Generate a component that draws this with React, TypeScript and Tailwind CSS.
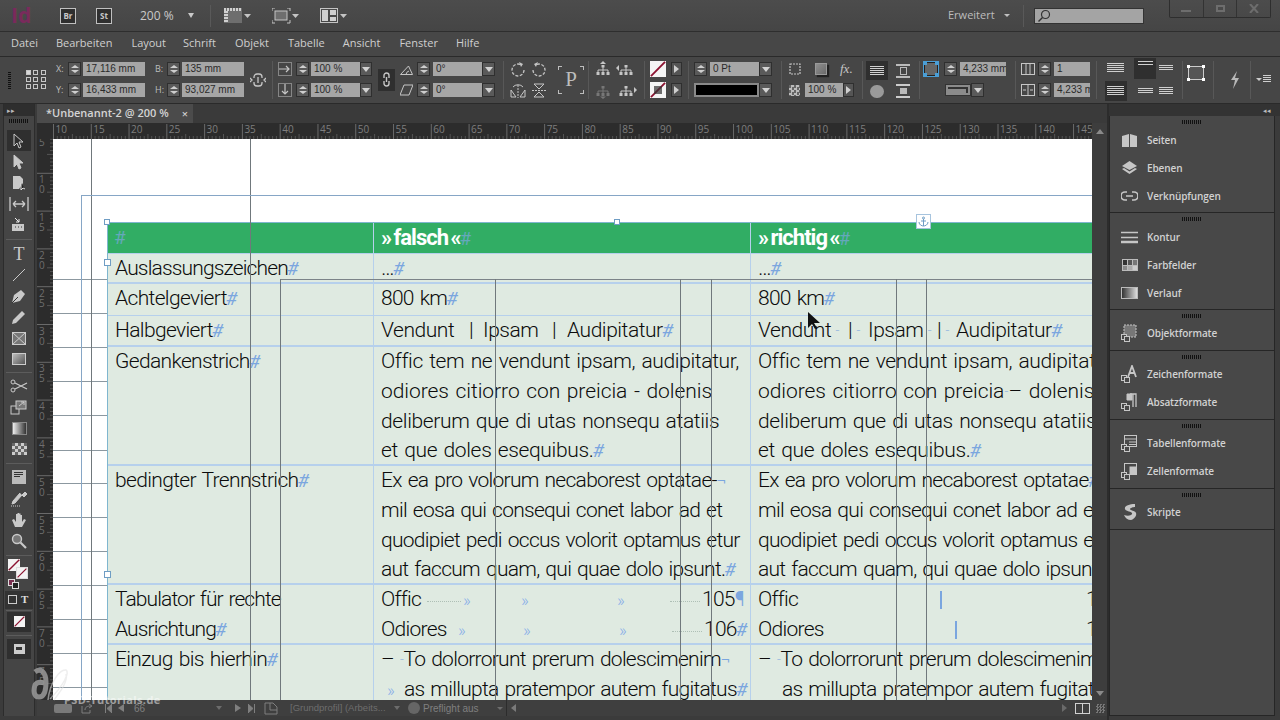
import React from "react";

const S = ({ w, h, children, className = "" }: { w: number; h: number; children?: React.ReactNode; className?: string }) => (
  <svg width={w} height={h} viewBox={`0 0 ${w} ${h}`} fill="none" stroke="currentColor" className={"shrink-0 " + className}>
    {children}
  </svg>
);

const Grip = ({ className = "" }: { className?: string }) => (
  <div className={"w-[20px] h-[4px] bg-[repeating-linear-gradient(90deg,#111_0_1px,transparent_1px_2px)] " + className} />
);

const Spin = () => (
  <div className="w-[13px] h-[14px] bg-[#5a5a5a] border border-[#2f2f2f] flex flex-col items-center justify-center gap-[2px] shrink-0">
    <div className="w-0 h-0 border-x-[4px] border-x-transparent border-b-[3px] border-b-[#cfcfcf]" />
    <div className="w-0 h-0 border-x-[4px] border-x-transparent border-t-[3px] border-t-[#cfcfcf]" />
  </div>
);

const Field = ({ children, className = "" }: { children?: React.ReactNode; className?: string }) => (
  <div className={"h-[14px] bg-[#a6a6a6] text-[#2a2a2a] text-[10px] leading-[14px] pl-[3px] overflow-hidden whitespace-nowrap shrink-0 font-['Liberation_Sans',sans-serif] " + className}>{children}</div>
);

const Drop = ({ className = "w-[12px]" }: { className?: string }) => (
  <div className={"h-[14px] bg-[#5a5a5a] border border-[#2f2f2f] flex items-center justify-center shrink-0 " + className}>
    <div className="w-0 h-0 border-x-[4px] border-x-transparent border-t-[5px] border-t-[#d2d2d2]" />
  </div>
);

const ArrowBox = () => (
  <div className="w-[11px] h-[14px] bg-[#555] border border-[#2f2f2f] flex items-center justify-center shrink-0">
    <div className="w-0 h-0 border-y-[4px] border-y-transparent border-l-[5px] border-l-[#cfcfcf]" />
  </div>
);

const Sep = ({ className }: { className: string }) => <div className={"w-px h-[38px] bg-[#585858] shrink-0 " + className} />;

const NoSwatch = ({ size = 17 }: { size?: number }) => (
  <svg width={size} height={size} viewBox="0 0 17 17" className="shrink-0">
    <rect width="17" height="17" fill="#f4f4f4" />
    <path d="M1 16 16 1" stroke="#8c1230" strokeWidth="2" />
  </svg>
);

const Row2 = ({ children, className = "" }: { children: React.ReactNode; className?: string }) => (
  <div className={"flex flex-col gap-[7px] shrink-0 " + className}>{children}</div>
);
const R = ({ children }: { children: React.ReactNode }) => <div className="flex items-center h-[14px]">{children}</div>;
const Lbl = ({ children }: { children: React.ReactNode }) => <div className="w-[12px] text-[9px] text-[#bdbdbd] leading-[14px]">{children}</div>;

function TitleBar() {
  return (
    <div className="h-[32px] shrink-0 relative flex items-center bg-[linear-gradient(#4c4c4c,#454545)] border-b border-[#2e2e2e] text-[#c9c9c9]">
      <div className="ml-[11px] w-[20px] text-[#7a2a5c] text-[21px] font-bold leading-none">Id</div>
      <div className="ml-[29px] w-[16px] h-[16px] border border-[#c0c0c0] bg-[#2f2f2f] text-[8px] font-bold leading-[14px] text-center">Br</div>
      <div className="ml-[20px] w-[16px] h-[16px] border border-[#c0c0c0] bg-[#2f2f2f] text-[8px] font-bold leading-[14px] text-center">St</div>
      <div className="ml-[28px] w-[40px] text-[12px]">200 %</div>
      <div className="ml-[8px] w-0 h-0 border-x-[3.5px] border-x-transparent border-t-[5px] border-t-[#c9c9c9]" />
      <div className="ml-[16px] w-px h-[22px] bg-[#595959]" />
      <S w={27} h={16} className="ml-[13px] text-[#c4c4c4]">
        <rect x="0" y="0" width="18" height="15" fill="#6e6e6e" stroke="none" />
        <path d="M0 1.500h18" stroke="#d0d0d0" strokeWidth="3" strokeDasharray="2 1" />
        <path d="M2 3v12" stroke="#d0d0d0" strokeWidth="4" strokeDasharray="2 1" />
        <path d="M20 6h7l-3.5 4z" fill="#c4c4c4" stroke="none" />
      </S>
      <S w={27} h={16} className="ml-[21px] text-[#c4c4c4]">
        <rect x="3" y="3" width="12" height="9" fill="#6e6e6e" />
        <path d="M0 3V0h3M15 0h3v3M0 12v3h3M15 15h3v-3" />
        <path d="M20 6h7l-3.5 4z" fill="#c4c4c4" stroke="none" />
      </S>
      <S w={27} h={16} className="ml-[21px] text-[#c4c4c4]">
        <rect x="0.5" y="0.5" width="17" height="14" />
        <rect x="2" y="2" width="6" height="11" fill="#cfcfcf" stroke="none" />
        <rect x="10" y="2" width="6" height="5" fill="#cfcfcf" stroke="none" />
        <rect x="10" y="9" width="6" height="4" fill="#cfcfcf" stroke="none" />
        <path d="M20 6h7l-3.5 4z" fill="#c4c4c4" stroke="none" />
      </S>
      <div className="flex-1" />
      <div className="w-[56px] text-[11px] text-[#bdbdbd]">Erweitert</div>
      <div className="w-0 h-0 border-x-[3px] border-x-transparent border-t-[3px] border-t-[#c0c0c0] mr-[13px]" />
      <div className="w-px h-[22px] bg-[#595959]" />
      <div className="ml-[10px] mr-[136px] w-[110px] h-[16px] bg-[#a4a4a4] border border-[#333] flex items-center pl-[2px] text-[#333]">
        <S w={14} h={14}>
          <circle cx="8.5" cy="5.5" r="4" strokeWidth="1.2" />
          <path d="M5.5 8.5 1.5 12.5" strokeWidth="1.5" />
        </S>
      </div>
      <div className="absolute right-[9px] top-0 w-[102px] h-[18px] border border-t-0 border-[#2e2e2e] rounded-b-[2px] flex text-[#6d6d6d]">
        <div className="flex-1 flex items-center justify-center border-r border-[#333]"><div className="w-[10px] h-[2px] mt-[4px] bg-[#6d6d6d]" /></div>
        <div className="flex-1 flex items-center justify-center border-r border-[#333]"><div className="w-[9px] h-[7px] border-2 border-[#6d6d6d]" /></div>
        <div className="flex-1 flex items-center justify-center">
          <S w={10} h={9}><path d="M1 0 9 9M9 0 1 9" strokeWidth="2" /></S>
        </div>
      </div>
    </div>
  );
}

function MenuBar() {
  const items = [
    ["Datei", "ml-[11px]"],
    ["Bearbeiten", "ml-[18px]"],
    ["Layout", "ml-[19px]"],
    ["Schrift", "ml-[17px]"],
    ["Objekt", "ml-[19px]"],
    ["Tabelle", "ml-[19px]"],
    ["Ansicht", "ml-[18px]"],
    ["Fenster", "ml-[19px]"],
    ["Hilfe", "ml-[18px]"],
  ];
  return (
    <div className="h-[24px] shrink-0 flex items-center pb-[2px] bg-[#474747] text-[11px] text-[#cfcfcf]">
      {items.map(([t, c]) => (
        <span key={t} className={c}>{t}</span>
      ))}
    </div>
  );
}

const Org = ({ dim = false, arrow }: { dim?: boolean; arrow: "u" | "d" | "l" | "r" }) => (
  <S w={21} h={17} className={dim ? "text-[#777]" : "text-[#c6c6c6]"}>
    <path d="M10 6v3M5 12V9h10v3M10 9v3" />
    <rect x="8.500" y="4" width="3" height="2.500" fill="currentColor" stroke="none" />
    <rect x="3.500" y="11" width="3" height="3" fill="currentColor" stroke="none" />
    <rect x="8.500" y="11" width="3" height="3" fill="currentColor" stroke="none" />
    <rect x="13.500" y="11" width="3" height="3" fill="currentColor" stroke="none" />
    {arrow === "u" && <path d="M7 3h6l-3-3z" fill="currentColor" stroke="none" />}
    {arrow === "d" && <path d="M7 14.500h6l-3 2.500z" fill="currentColor" stroke="none" />}
    {arrow === "l" && <path d="M3 4v6L0 7z" fill="currentColor" stroke="none" />}
    {arrow === "r" && <path d="M18 5v6l3-3z" fill="currentColor" stroke="none" />}
  </S>
);

function ControlBar() {
  const ic = "text-[#c6c6c6]";
  return (
    <div className="h-[48px] shrink-0 flex items-center pb-[1px] bg-[#464646] border-y border-[#2a2a2a] text-[#c6c6c6] overflow-hidden">
      <div className="ml-[8px] w-[3px] h-[18px] bg-[repeating-linear-gradient(0deg,#111_0_1px,transparent_1px_2px)] shrink-0" />
      <div className="ml-[15px] w-[20px] grid grid-cols-3 gap-[2px] shrink-0">
        {Array.from({ length: 9 }).map((_, i) => (
          <div key={i} className={"w-[5px] h-[5px] border border-[#c6c6c6] " + (i === 0 ? "bg-[#d8d8d8]" : "")} />
        ))}
      </div>
      <Row2 className="ml-[10px]">
        <R><Lbl>X:</Lbl><Spin /><Field className="ml-[2px] w-[62px]">17,116 mm</Field></R>
        <R><Lbl>Y:</Lbl><Spin /><Field className="ml-[2px] w-[62px]">16,433 mm</Field></R>
      </Row2>
      <Row2 className="ml-[10px]">
        <R><Lbl>B:</Lbl><Spin /><Field className="ml-[2px] w-[62px]">135 mm</Field></R>
        <R><Lbl>H:</Lbl><Spin /><Field className="ml-[2px] w-[62px]">93,027 mm</Field></R>
      </Row2>
      <S w={16} h={16} className="ml-[6px]">
        <path d="M4 6V5a3 3 0 0 1 3-3h2a3 3 0 0 1 3 3v1M4 10v1a3 3 0 0 0 3 3h2a3 3 0 0 0 3-3v-1M8 5v6M0 6l2 2-2 2M16 6l-2 2 2 2" strokeWidth="1.3" />
      </S>
      <Sep className="ml-[6px]" />
      <Row2 className="ml-[5px]">
        <R>
          <S w={14} h={14}><rect x="0.5" y="0.5" width="13" height="13" strokeDasharray="1 1" /><path d="M1 7h10M8 4l3 3-3 3" strokeWidth="1.2" /></S>
          <div className="w-[4px]" /><Spin /><Field className="ml-[2px] w-[49px]">100 %</Field><Drop />
        </R>
        <R>
          <S w={14} h={14}><rect x="0.5" y="0.5" width="13" height="13" strokeDasharray="1 1" /><path d="M7 1v10M4 8l3 3 3-3" strokeWidth="1.2" /></S>
          <div className="w-[4px]" /><Spin /><Field className="ml-[2px] w-[49px]">100 %</Field><Drop />
        </R>
      </Row2>
      <div className="ml-[6px] w-[17px] h-[22px] bg-[#2f2f2f] flex items-center justify-center shrink-0">
        <S w={9} h={15}><path d="M2 6V3.5a2.5 2.5 0 0 1 5 0V6M2 9v2.5a2.5 2.5 0 0 0 5 0V9M4.5 5v5" strokeWidth="1.4" /></S>
      </div>
      <Row2 className="ml-[5px]">
        <R>
          <S w={13} h={14}><path d="M0.5 12.5h12L8.5 4zM6 12.5a4 4 0 0 1 3-3.5" /></S>
          <div className="w-[4px]" /><Spin /><Field className="ml-[3px] w-[49px]">0°</Field><Drop className="w-[13px]" />
        </R>
        <R>
          <S w={13} h={14}><path d="M4 2h9l-4 10H0z" /></S>
          <div className="w-[4px]" /><Spin /><Field className="ml-[3px] w-[49px]">0°</Field><Drop className="w-[13px]" />
        </R>
      </Row2>
      <Sep className="ml-[8px]" />
      <div className={"ml-[6px] w-[42px] grid grid-cols-2 gap-y-[6px] shrink-0 " + ic}>
        <S w={16} h={15}><path d="M14 8a6 6 0 1 1-3-5.2" strokeDasharray="3 1.5" strokeWidth="1.3" /><path d="M9 0l4 2-2 3z" fill="currentColor" stroke="none" /></S>
        <S w={16} h={15}><path d="M2 8a6 6 0 1 0 3-5.2" strokeDasharray="3 1.5" strokeWidth="1.3" /><path d="M7 0 3 2l2 3z" fill="currentColor" stroke="none" /></S>
        <S w={16} h={15}><path d="M8 2v13" strokeDasharray="2 1" /><path d="M6 14H1V7zM10 14h5V7z" /><path d="M3 4a6 5 0 0 1 10 0" /></S>
        <S w={16} h={15}><path d="M1 7.5h14" strokeDasharray="2 1" /><path d="M3 1h10L8 6zM3 14h10L8 9z" /></S>
      </div>
      <div className="ml-[6px] w-[26px] h-[28px] relative shrink-0 flex items-center justify-center text-[#bdbdbd] text-[21px] font-['Liberation_Serif',serif] leading-none">
        P
        <div className="absolute left-0 top-0 w-[4px] h-[4px] border-l border-t border-[#bdbdbd]" />
        <div className="absolute right-0 top-0 w-[4px] h-[4px] border-r border-t border-[#bdbdbd]" />
        <div className="absolute left-0 bottom-0 w-[4px] h-[4px] border-l border-b border-[#bdbdbd]" />
        <div className="absolute right-0 bottom-0 w-[4px] h-[4px] border-r border-b border-[#bdbdbd]" />
      </div>
      <Sep className="ml-[4px]" />
      <div className="ml-[4px] w-[44px] grid grid-cols-[23px_21px] gap-y-[4px] shrink-0">
        <Org arrow="u" />
        <Org arrow="l" />
        <Org arrow="d" dim />
        <Org arrow="r" />
      </div>
      <Sep className="ml-[7px]" />
      <Row2 className="ml-[5px] w-[32px]">
        <R><NoSwatch size={16} /><div className="w-[5px]" /><ArrowBox /></R>
        <R>
          <div className="relative">
            <NoSwatch size={16} />
            <div className="absolute left-[4px] top-[4px] w-[8px] h-[8px] bg-[#333]/70" />
          </div>
          <div className="w-[5px]" /><ArrowBox />
        </R>
      </Row2>
      <Sep className="ml-[6px]" />
      <Row2 className="ml-[5px] w-[78px]">
        <R><Spin /><Field className="ml-[3px] w-[49px]">0 Pt</Field><Drop className="w-[13px]" /></R>
        <R><div className="w-[65px] h-[14px] bg-black border-2 border-[#8a8a8a]" /><Drop className="w-[13px]" /></R>
      </Row2>
      <Sep className="ml-[9px]" />
      <Row2 className="ml-[7px] w-[66px]">
        <R>
          <S w={14} h={13}><rect x="1" y="1" width="10" height="10" strokeDasharray="2 1" strokeWidth="1.2" /></S>
          <div className="w-[12px]" />
          <div className="w-[12px] h-[12px] bg-[linear-gradient(135deg,#8f8f8f,#6a6a6a)] border border-[#999] shadow-[2px_2px_1px_#222]" />
          <div className="w-[13px]" />
          <span className="text-[13px] italic font-['Liberation_Serif',serif]">fx.</span>
        </R>
        <R>
          <div className="w-[11px] h-[11px] bg-[repeating-conic-gradient(#bbb_0_25%,#666_0_50%)] bg-[length:5px_5px] shrink-0" />
          <Field className="ml-[5px] w-[38px]">100 %</Field>
          <ArrowBox />
        </R>
      </Row2>
      <Sep className="ml-[7px]" />
      <div className="ml-[3px] w-[44px] grid grid-cols-2 items-center gap-y-[4px] shrink-0">
        <div className="w-[22px] h-[19px] bg-[#2f2f2f] flex flex-col items-center justify-center gap-[1px]">
          {[0, 1, 2, 3, 4].map((i) => <div key={i} className="w-[14px] h-px bg-[#d0d0d0]" />)}
        </div>
        <div className="ml-[8px] w-[14px] h-[14px] border-y-2 border-[#bbb] flex items-center justify-center"><div className="w-[7px] h-[8px] border border-[#bbb]" /></div>
        <div className="ml-[4px] w-[14px] h-[13px] rounded-full bg-[#9a9a9a]" />
        <div className="ml-[8px] w-[14px] h-[14px] border-y-2 border-[#ccc] flex items-center justify-center"><div className="w-[7px] h-[6px] bg-[#bbb]" /></div>
      </div>
      <Sep className="ml-[9px]" />
      <Row2 className="ml-[4px] w-[82px]">
        <R>
          <div className="w-[14px] h-[14px] bg-[#666] border border-[#222] relative shrink-0 outline outline-1 outline-[#4a9ed6]">
            <div className="absolute -left-[2px] -top-[2px] w-[4px] h-[4px] bg-[#4a9ed6]" />
            <div className="absolute -right-[2px] -top-[2px] w-[4px] h-[4px] bg-[#4a9ed6]" />
            <div className="absolute -left-[2px] -bottom-[2px] w-[4px] h-[4px] bg-[#4a9ed6]" />
            <div className="absolute -right-[2px] -bottom-[2px] w-[4px] h-[4px] bg-[#4a9ed6]" />
          </div>
          <div className="w-[6px]" /><Spin /><Field className="ml-[3px] w-[46px]">4,233 mm</Field>
        </R>
        <R>
          <div className="w-[21px]" />
          <div className="w-[26px] h-[12px] bg-[#8b8b8b] border border-[#333] relative shrink-0">
            <div className="absolute right-[2px] top-[2px] w-[20px] h-[6px] border-t-2 border-r-2 border-[#333]" />
          </div>
          <Drop className="w-[13px]" />
        </R>
      </Row2>
      <Sep className="ml-[9px]" />
      <Row2 className="ml-[5px] w-[69px]">
        <R>
          <S w={14} h={14}><rect x="0.5" y="1.5" width="13" height="11" /><path d="M5 1.5v11M9 1.5v11" /></S>
          <div className="w-[3px]" /><Spin /><Field className="ml-[3px] w-[36px]">1</Field>
        </R>
        <R>
          <S w={14} h={14}><rect x="0.5" y="1.5" width="13" height="11" /><path d="M7 1.5v11M2 7h3M12 7H9" /></S>
          <div className="w-[3px]" /><Spin /><Field className="ml-[3px] w-[36px]">4,233 m</Field>
        </R>
      </Row2>
      <Sep className="ml-[6px]" />
      <div className="ml-[3px] w-[73px] shrink-0 grid grid-cols-[31px_28px_14px] items-center justify-items-center gap-y-[2px]">
        <Lines w={17} />
        <div className="w-[22px] h-[21px] bg-[#2f2f2f] flex flex-col items-center pt-[3px] gap-[2px]">
          <div className="w-[15px] h-px bg-[#d0d0d0]" /><div className="w-[15px] h-px bg-[#d0d0d0]" />
        </div>
        <Lines w={14} n={3} />
        <div className="w-[22px] h-[20px] bg-[#2f2f2f] flex items-center justify-center"><Lines w={17} /></div>
        <Lines w={15} n={3} />
        <Lines w={14} n={4} />
      </div>
      <Sep className="ml-[9px]" />
      <div className="ml-[5px] w-[16px] h-[14px] border border-[#ccc] relative shrink-0 mb-[13px] bg-[#555]">
        <div className="absolute -left-[2px] -top-[2px] w-[3px] h-[3px] bg-white" />
        <div className="absolute -right-[2px] -top-[2px] w-[3px] h-[3px] bg-white" />
        <div className="absolute -left-[2px] -bottom-[2px] w-[3px] h-[3px] bg-white" />
        <div className="absolute -right-[2px] -bottom-[2px] w-[3px] h-[3px] bg-white" />
      </div>
      <Sep className="ml-[9px]" />
      <S w={10} h={18} className="ml-[16px] text-[#b8b8b8]"><path d="M7 0 1 9h4l-2 9 6-11H5z" fill="currentColor" stroke="none" /></S>
      <Sep className="ml-[10px]" />
      <div className="ml-[5px] flex items-center gap-[1px] shrink-0">
        <div className="w-0 h-0 border-x-[3px] border-x-transparent border-t-[3px] border-t-[#ccc]" />
        <Lines w={8} n={4} />
      </div>
    </div>
  );
}

const Lines = ({ w, n = 5 }: { w: number; n?: number }) => (
  <svg width={w} height={n * 2 + 1} className="shrink-0 text-[#cfcfcf]" stroke="currentColor">
    {Array.from({ length: n }).map((_, i) => (
      <line key={i} x1="0" x2={w} y1={i * 2 + 0.5} y2={i * 2 + 0.5} />
    ))}
  </svg>
);

const Tool = ({ children, className = "" }: { children: React.ReactNode; className?: string }) => (
  <div className={"h-[21.2px] shrink-0 flex items-center justify-center relative text-[#c9c9c9] " + className}>{children}</div>
);
const TSep = ({ className = "my-[3px]" }: { className?: string }) => <div className={"mx-[2px] h-px bg-[#5c5c5c] shrink-0 " + className} />;

function LeftTools() {
  return (
    <div className="w-[37px] shrink-0 flex mb-[4px]">
      <div className="w-[3px]" />
      <div className="w-[32px] bg-[#454545] border-x border-[#2c2c2c] flex flex-col">
        <div className="h-[12px] bg-[#2e2e2e] shrink-0 flex items-center pl-[3px]">
          <span className="text-[7px] text-[#bbb] leading-none">▸▸</span>
        </div>
        <Grip className="mt-[3px] mx-auto w-[18px] h-[3px] shrink-0" />
        <div className="h-[7px] shrink-0" />
        <Tool className="mx-[3px] bg-[#2f2f2f]">
          <S w={12} h={16}><path d="M1 1v12l3-3 2 5 2-1-2-5h4z" /></S>
        </Tool>
        <Tool><S w={12} h={16}><path d="M1 1v12l3-3 2 5 2-1-2-5h4z" fill="currentColor" /></S></Tool>
        <Tool>
          <S w={16} h={16}>
            <path d="M2 1h7l3 3v4L8 14H2z" fill="currentColor" stroke="none" />
            <path d="M10 8v7l2-2 2 1" fill="#222" stroke="#ddd" />
          </S>
        </Tool>
        <Tool>
          <S w={20} h={14}><path d="M1 0v14M19 0v14M4 7h12M4 7l3-3M4 7l3 3M16 7l-3-3M16 7l-3 3" strokeWidth="1.3" /></S>
        </Tool>
        <Tool>
          <S w={18} h={16}><path d="M2 7h12v7H2z" fill="currentColor" stroke="none" /><path d="M5 1l4 4M9 2v3H6" stroke="#eee" /><path d="M5 10h1M8 10h1M11 10h1" stroke="#333" /></S>
        </Tool>
        <TSep />
        <Tool><span className="font-['Liberation_Serif',serif] text-[18px] leading-none">T</span></Tool>
        <Tool><S w={14} h={14}><path d="M1 13 13 1" /></S></Tool>
        <Tool><S w={16} h={16}><path d="M1 15 3 7 10 2l4 4-5 7z" fill="currentColor" stroke="none" /><path d="M1 15 7 9" stroke="#333" /></S></Tool>
        <Tool><S w={16} h={16}><path d="M1 15l1-4 9-9 3 3-9 9z" fill="currentColor" stroke="none" /></S></Tool>
        <Tool><S w={14} h={13}><rect x="0.5" y="0.5" width="13" height="12" fill="#777" stroke="#ccc" /><path d="M0.5 0.5l13 12M13.5 0.5l-13 12" stroke="#ccc" /></S></Tool>
        <Tool><div className="w-[14px] h-[12px] bg-[linear-gradient(135deg,#bbb,#555)] border border-[#ccc]" /></Tool>
        <TSep className="my-[2px]" />
        <Tool>
          <S w={18} h={14}><circle cx="3" cy="3" r="2" /><circle cx="3" cy="11" r="2" /><path d="M5 4l12 6M5 10l12-6" strokeWidth="1.3" /></S>
        </Tool>
        <Tool>
          <S w={18} h={16}><rect x="1" y="7" width="8" height="8" /><rect x="6" y="2" width="10" height="8" fill="#777" stroke="#ccc" /><path d="M9 7l5-4M11 3h3v3" /></S>
        </Tool>
        <Tool><div className="w-[15px] h-[13px] bg-[linear-gradient(90deg,#eee,#333)] border border-[#888]" /></Tool>
        <Tool><div className="w-[15px] h-[12px] bg-[repeating-conic-gradient(#ccc_0_25%,#666_0_50%)] bg-[length:6px_6px]" /></Tool>
        <TSep />
        <Tool><div className="w-[14px] h-[14px] bg-[#bbb] flex flex-col gap-[1px] pt-[2px] pl-[2px]"><div className="w-[9px] h-px bg-[#333]" /><div className="w-[9px] h-px bg-[#333]" /><div className="w-[6px] h-px bg-[#333]" /></div></Tool>
        <Tool><S w={18} h={16}><path d="M15 1l2 2-3 3-2-2zM12 4l-7 8-3 1 1-3 7-8" fill="currentColor" stroke="#ccc" /><path d="M1 15h10" strokeDasharray="1 1" /></S></Tool>
        <Tool><S w={16} h={16}><path d="M4 15 1 8l2-1 2 3V2h1.5v6V1h1.5v7V1.5h1.5V8V3H11v7l2-3 2 1-4 7z" fill="currentColor" stroke="none" /></S></Tool>
        <Tool><S w={16} h={16}><circle cx="6" cy="6" r="4.5" fill="#777" strokeWidth="1.4" /><path d="M9.5 9.5 15 15" strokeWidth="2.2" /></S></Tool>
        <TSep />
        <div className="h-[20px] shrink-0 relative">
          <div className="absolute left-[4px] top-[0px]"><NoSwatch size={12} /></div>
          <div className="absolute left-[12px] top-[8px] border border-[#ddd]"><NoSwatch size={10} /></div>
        </div>
        <div className="h-[12px] shrink-0 relative">
          <div className="absolute left-[4px] top-0 w-[7px] h-[7px] border border-[#ddd] bg-[#7a3050]" />
          <div className="absolute left-[8px] top-[3px] w-[7px] h-[7px] border border-[#ddd] bg-[#222]" />
        </div>
        <div className="h-[18px] shrink-0 flex items-center gap-[4px] pl-[3px] bg-[#333] mx-[1px]">
          <div className="w-[9px] h-[9px] border border-[#ccc]" />
          <span className="text-[11px] font-bold font-['Liberation_Serif',serif] text-[#ddd] leading-none">T</span>
        </div>
        <TSep className="my-[1px]" />
        <div className="mx-[3px] h-[20px] shrink-0 bg-[#2f2f2f] flex items-center justify-center"><NoSwatch size={11} /></div>
        <TSep />
        <div className="mx-[3px] h-[20px] shrink-0 bg-[#2f2f2f] flex items-center justify-center">
          <div className="w-[11px] h-[10px] bg-[#ccc] flex items-center justify-center"><div className="w-[6px] h-[3px] bg-[#333]" /></div>
        </div>
      </div>
    </div>
  );
}

function HRuler() {
  const sp = 37.78;
  const major = Array.from({ length: 28 }).map((_, i) => i);
  return (
    <svg width="1055" height="16" className="block bg-[#2c2c2c] shrink-0 text-[#6a6a6a]" stroke="currentColor">
      {major.map((i) => {
        const x = 16.5 + i * sp;
        return (
          <g key={i}>
            <line x1={x} x2={x} y1="1" y2="16" />
            {[1, 2, 3, 4, 5, 6, 7, 8, 9].map((k) => (
              <line key={k} x1={x + (k * sp) / 10} x2={x + (k * sp) / 10} y1={k === 5 ? 11 : 13} y2="16" stroke="#555" />
            ))}
            <text x={x + 2} y="10" fontSize="10" fontFamily="'Open Sans',sans-serif" fill="#7e7e7e" stroke="none">{10 + i * 5}</text>
          </g>
        );
      })}
    </svg>
  );
}

function VRuler() {
  const sp = 37.8;
  const major = Array.from({ length: 16 }).map((_, i) => i);
  return (
    <svg width="16" height="561" className="block bg-[#2c2c2c] shrink-0 text-[#6a6a6a]" stroke="currentColor">
      {major.map((i) => {
        const y = -3.5 + i * sp;
        const label = String(5 + i * 5);
        return (
          <g key={i}>
            <line x1="0" x2="16" y1={y} y2={y} />
            {[1, 2, 3, 4, 5, 6, 7, 8, 9].map((k) => (
              <line key={k} x1={k === 5 ? 10 : 13} x2="16" y1={y + (k * sp) / 10} y2={y + (k * sp) / 10} stroke="#555" />
            ))}
            {label.split("").map((d, j) => (
              <text key={j} x="2" y={y + 10 + j * 10} fontSize="10" fontFamily="'Open Sans',sans-serif" fill="#6e6e6e" stroke="none">{d}</text>
            ))}
          </g>
        );
      })}
    </svg>
  );
}

const H = ({ c = "" }: { c?: string }) => <span className={"text-[#7ba6df] italic text-[19px] leading-[0] -ml-[1px] font-normal tracking-normal " + c}>#</span>;
const Br = () => <span className="text-[#7ba6df] text-[18px] leading-[0]">¬</span>;
const Gl = ({ children }: { children: React.ReactNode }) => <span className="text-[#7ba6df] text-[12px] leading-[0]">{children}</span>;
const Chev = ({ className }: { className: string }) => <span className={"text-[#88aee8] text-[17px] leading-[0] shrink-0 " + className}>»</span>;
const Dots = ({ className }: { className: string }) => (
  <span className={"h-0 border-t border-dotted border-[#aebfb5] mt-[3px] shrink-0 " + className} />
);

const Cell = ({ children, className = "" }: { children?: React.ReactNode; className?: string }) => (
  <div className={"pl-[7px] border-r border-[#b6d0ec] whitespace-nowrap overflow-hidden " + className}>{children}</div>
);

const rowSep = "border-b-2 border-[#b5cfe8]";
const headCell = "h-[31px] bg-[#31ad64] text-white font-bold text-[22px] tracking-[-1px] border-b border-[#a9d0c0] [word-spacing:-2px]";
const left = "tracking-[-0.65px]";
const gedanken = "tracking-[-0.35px]";
const wide = "tracking-[-0.05px]";

function Table() {
  return (
    <div className="w-[1043px] grid grid-cols-[266px_377px_400px] border-l border-t border-[#7fb6cf] bg-[#dfeae1] text-[#0c0c0c] text-[21px] leading-[29.75px] font-[350] tracking-[-0.72px] [word-spacing:1.5px] font-['Roboto',sans-serif]">
      <Cell className="h-[31px] bg-[#31ad64] border-b border-[#a9d0c0]"><H c="not-italic opacity-70" /></Cell>
      <Cell className={headCell}>» falsch «<H c="not-italic opacity-70" /></Cell>
      <Cell className={headCell + " border-r-0"}>» richtig «<H c="not-italic opacity-70" /></Cell>

      <Cell className={"h-[30px] tracking-[-0.85px] " + rowSep}>Auslassungszeichen<H /></Cell>
      <Cell className={"h-[30px] " + rowSep}>…<H /></Cell>
      <Cell className={"h-[30px] border-r-0 " + rowSep}>…<H /></Cell>

      <Cell className={"h-[32px] border-b border-[#b5cfe8] " + left}>Achtelgeviert<H /></Cell>
      <Cell className="h-[32px] border-b border-[#b5cfe8]">800 km<H /></Cell>
      <Cell className="h-[32px] border-b border-[#b5cfe8] border-r-0">800 km<H /></Cell>

      <Cell className={"h-[31px] " + left + " " + rowSep}>Halbgeviert<H /></Cell>
      <Cell className={"h-[31px] tracking-[-0.45px] " + rowSep}>
        <span className="inline-block w-[88px]">Vendunt</span><span className="inline-block w-[14px]">|</span><span className="inline-block w-[69px]">Ipsam</span><span className="inline-block w-[15px]">|</span>Audipitatur<H />
      </Cell>
      <Cell className={"h-[31px] border-r-0 tracking-[-0.45px] " + rowSep}>
        <span className="inline-block w-[90px]">Vendunt<Gl> ⁻</Gl></span><span className="inline-block w-[20px]">|<Gl> ⁻</Gl></span><span className="inline-block w-[69px]">Ipsam<Gl> ⁻</Gl></span><span className="inline-block w-[19px]">|<Gl> ⁻</Gl></span>Audipitatur<H />
      </Cell>

      <Cell className={"h-[119px] " + left + " " + rowSep}>Gedankenstrich<H /></Cell>
      <Cell className={"h-[119px] " + gedanken + " " + rowSep}>
        Offic tem ne vendunt ipsam, audipitatur,<br /><span className={wide}>odiores citiorro con preicia - dolenis</span><br />deliberum que di utas nonsequ atatiis<br />et que doles esequibus.<H />
      </Cell>
      <Cell className={"h-[119px] border-r-0 " + gedanken + " " + rowSep}>
        Offic tem ne vendunt ipsam, audipitatur,<br /><span className={wide}>odiores citiorro con preicia<Gl>⁻</Gl>– dolenis</span><br />deliberum que di utas nonsequ atatiis<br />et que doles esequibus.<H />
      </Cell>

      <Cell className={"h-[119px] " + left + " " + rowSep}>bedingter Trennstrich<H /></Cell>
      <Cell className={"h-[119px] " + rowSep}>
        Ex ea pro volorum necaborest optatae-<Br /><br />mil eosa qui consequi conet labor ad et<br />quodipiet pedi occus volorit optamus etur<br />aut faccum quam, qui quae dolo ipsunt.<H />
      </Cell>
      <Cell className={"h-[119px] border-r-0 " + rowSep}>
        Ex ea pro volorum necaborest optatae<H /><br />mil eosa qui consequi conet labor ad et<br />quodipiet pedi occus volorit optamus etur<br />aut faccum quam, qui quae dolo ipsunt.<H />
      </Cell>

      <Cell className={"h-[60px] pl-[6px] tracking-[-0.9px] " + rowSep}>Tabulator für rechte<br />Ausrichtung<H /></Cell>
      <Cell className={"h-[60px] " + rowSep}>
        <div className="flex items-center h-[30px]">
          <span className="w-[46px] shrink-0">Offic</span><Dots className="w-[34px] mr-[2px]" /><Chev className="w-[58px]" /><Chev className="w-[96px]" /><Chev className="w-[53px]" /><Dots className="w-[30px]" /><span className="ml-[2px]">105</span><span className="text-[#7ba6df]">¶</span>
        </div>
        <div className="flex items-center h-[30px]">
          <span className="w-[77px] shrink-0">Odiores</span><Chev className="w-[65px]" /><Chev className="w-[96px]" /><Chev className="w-[53px]" /><Dots className="w-[30px]" /><span className="ml-[2px]">106</span><H />
        </div>
      </Cell>
      <Cell className={"h-[60px] border-r-0 " + rowSep}>
        <div className="flex items-center h-[30px]"><span className="w-[182px] shrink-0">Offic</span><span className="w-[2px] h-[18px] bg-[#7ba6df] shrink-0" /><span className="ml-[144px]">1</span></div>
        <div className="flex items-center h-[30px]"><span className="w-[197px] shrink-0">Odiores</span><span className="w-[2px] h-[18px] bg-[#7ba6df] shrink-0" /><span className="ml-[129px]">1</span></div>
      </Cell>

      <Cell className={"h-[60px] " + left}>Einzug bis hierhin<H /></Cell>
      <Cell className="h-[60px]">
        – <Gl>⁻</Gl>To dolorrorunt prerum dolescimenim<Br /><br /><Chev className="ml-[6px] mr-[10px]" />as millupta pratempor autem fugitatus<H />
      </Cell>
      <Cell className="h-[60px] border-r-0">
        – <Gl>⁻</Gl>To dolorrorunt prerum dolescimenim<br /><span className="ml-[24px]">as millupta pratempor autem fugitatus</span>
      </Cell>
    </div>
  );
}

const greyV = [
  [91, 0, 561],
  [250, 0, 561],
  [280, 140, 421],
  [495, 140, 421],
  [680, 140, 421],
  [711, 140, 421],
  [896, 140, 421],
  [926, 140, 421],
];
const greyH = [313, 347, 381, 415, 450, 483, 517, 551, 585, 619, 653, 687];

const Handle = ({ className }: { className: string }) => (
  <div className={"absolute bg-white border border-[#6f9dc4] " + className} />
);

function Canvas() {
  return (
    <div className="relative w-[1039px] h-[561px] bg-white overflow-hidden pl-[54px] pt-[83px] shrink-0">
      {greyH.map((y) => (
        <div key={y} className="absolute left-0 w-[54px] h-px bg-[#8c98a0]" style={{ top: y - 139 }} />
      ))}
      <div className="absolute left-0 w-[54px] h-px bg-[#8c98a0] top-[140px]" />
      <div className="relative z-0"><Table /></div>
      <div className="absolute left-[227px] top-[140px] w-[812px] h-px bg-[#7b8388]" />
      {greyV.map(([x, t, h]) => (
        <div key={x} className="absolute w-px bg-[#70787c]" style={{ left: x - 53, top: t, height: h }} />
      ))}
      <div className="absolute left-[28px] top-[56px] w-px h-[505px] bg-[#86a6c6]" />
      <div className="absolute left-[28px] top-[56px] w-[1011px] h-px bg-[#86a6c6]" />
      <Handle className="left-[51px] top-[80px] w-[6px] h-[6px]" />
      <Handle className="left-[51px] top-[120px] w-[7px] h-[7px]" />
      <Handle className="left-[561px] top-[80px] w-[6px] h-[6px]" />
      <Handle className="left-[51px] top-[432px] w-[7px] h-[7px]" />
      <div className="absolute left-[863px] top-[75px] w-[15px] h-[15px] bg-white border border-[#a7c4de] flex items-center justify-center text-[#6f9dc4]">
        <S w={11} h={11}><circle cx="5.5" cy="2" r="1" /><path d="M5.5 3v7M3 5h5M1 6c0 3 3 4 4.5 4S10 9 10 6" /></S>
      </div>
      <svg width="13" height="17" className="absolute left-[755px] top-[173px]"><path d="M0 0v16l4-4 3 5 2-1-3-5h6z" fill="#111" /></svg>
    </div>
  );
}

function Tabs() {
  return (
    <div className="h-[19px] shrink-0 flex bg-[#3a3a3a]">
      <div className="w-[156px] bg-[#4b4b4b] flex items-center pl-[9px] text-[11px] font-semibold text-[#d4d4d4]">
        <span className="whitespace-nowrap">*Unbenannt-2 @ 200 %</span>
        <span className="ml-auto mr-[5px] text-[11px] text-[#ccc] leading-none">×</span>
      </div>
    </div>
  );
}

function Scrollbar() {
  return (
    <div className="w-[15px] h-[561px] bg-[#3d3d3d] shrink-0 flex flex-col justify-end items-center pb-[4px]">
      <div className="w-0 h-0 border-x-[4px] border-x-transparent border-t-[5px] border-t-[#8a8a8a]" />
    </div>
  );
}

function StatusBar() {
  const tri = "w-0 h-0 border-y-[4px] border-y-transparent";
  return (
    <div className="h-[16px] shrink-0 flex items-center bg-[#3f3f3f] text-[#7f7f7f] text-[10px] whitespace-nowrap relative z-10 font-['Liberation_Sans',sans-serif]">
      <div className="ml-[17px] w-[18px] h-[9px] bg-[#7a7a7a] rounded-[2px]" />
      <S w={12} h={11} className="ml-[9px]"><path d="M1 3v7h8V7M4 7c0-3 2-4 6-4M8 1l3 2-3 2" /></S>
      <S w={7} h={9} className="ml-[12px]"><path d="M0.5 0v9M7 0v9L2 4.5z" fill="currentColor" /></S>
      <div className={tri + " ml-[6px] border-r-[6px] border-r-[#7f7f7f]"} />
      <span className="ml-[10px] w-[82px]">66</span>
      <div className="w-0 h-0 border-x-[3px] border-x-transparent border-t-[4px] border-t-[#6c6c6c]" />
      <div className={tri + " ml-[13px] border-l-[6px] border-l-[#7f7f7f]"} />
      <S w={7} h={9} className="ml-[7px]"><path d="M6.5 0v9M0 0v9l5-4.5z" fill="currentColor" /></S>
      <S w={15} h={13} className="ml-[9px]"><path d="M1 12V1h8l4 4v7zM6 1v7h7" /></S>
      <span className="ml-[11px] w-[92px] text-[#6e6e6e] text-[9.5px]">[Grundprofil] (Arbeits...</span>
      <div className="ml-[12px] w-0 h-0 border-x-[3px] border-x-transparent border-t-[4px] border-t-[#6c6c6c]" />
      <div className="ml-[8px] w-[12px] h-[12px] rounded-full bg-[#666]" />
      <span className="ml-[3px] w-[50px]">Preflight aus</span>
      <div className="ml-[24px] w-0 h-0 border-x-[3px] border-x-transparent border-t-[3px] border-t-[#6c6c6c]" />
      <div className="ml-[3px] w-px h-[16px] bg-[#2c2c2c]" />
      <div className={tri + " ml-[4px] border-r-[5px] border-r-[#7a7a7a]"} />
      <div className="flex-1" />
      <div className={tri + " border-l-[5px] border-l-[#6a6a6a]"} />
      <div className="ml-[8px] w-[15px] h-[11px] border border-[#d0d0d0] flex"><div className="w-1/2 border-r border-[#d0d0d0]" /></div>
      <div className="ml-[6px] mr-[2px] w-[9px] h-[9px] bg-[repeating-conic-gradient(#777_0_25%,transparent_0_50%)] bg-[length:3px_3px]" />
    </div>
  );
}

const PanelItem = ({ icon, label }: { icon: React.ReactNode; label: string }) => (
  <div className="h-[28px] flex items-center">
    <div className="w-[31px] flex justify-end pr-[3px] text-[#c6c6c6]">{icon}</div>
    <span className="ml-[6px] text-[10px] font-semibold text-[#d2d2d2] tracking-[-0.1px]">{label}</span>
  </div>
);

const Sty = ({ children }: { children?: React.ReactNode }) => (
  <svg width="18" height="18" className="shrink-0" fill="none" stroke="currentColor">
    {children}
    <rect x="1.5" y="10.5" width="5" height="5" fill="#484848" />
    <rect x="4.5" y="12.5" width="5" height="5" fill="#484848" />
  </svg>
);

const Section = ({ children, tight = false }: { children: React.ReactNode; tight?: boolean }) => (
  <div className={"border-b border-[#262626] flex flex-col " + (tight ? "pb-[3px]" : "pb-[2px]")}>
    <Grip className={"mx-auto mt-[4px] shrink-0 w-[20px] h-[4px] " + (tight ? "mb-[1px]" : "mb-[2px]")} />
    {children}
  </div>
);

function RightPanel() {
  return (
    <div className="w-[171px] shrink-0 flex flex-col">
      <div className="h-[12px] bg-[#333] shrink-0 flex items-center justify-end pr-[9px]">
        <span className="text-[7px] text-[#bbb] leading-none">◂◂</span>
      </div>
      <div className="flex-1 w-[166px] bg-[#484848] border-x border-[#262626] border-b">
        <Section>
          <PanelItem label="Seiten" icon={<S w={17} h={15}><path d="M1 3l7-2v13H1zM16 3 9 1v13h7z" fill="currentColor" stroke="none" /></S>} />
          <PanelItem label="Ebenen" icon={<S w={17} h={16}><path d="M8.5 1 16 6l-7.5 4L1 6z" fill="currentColor" stroke="none" /><path d="M1 9l7.5 5L16 9l-2-1-5.5 3.500L3 8z" fill="currentColor" stroke="none" /></S>} />
          <PanelItem label="Verknüpfungen" icon={<S w={17} h={12}><path d="M6 2H4a3.500 3.500 0 0 0 0 8h2M11 2h2a3.500 3.500 0 0 1 0 8h-2M5 6h7" strokeWidth="1.7" /></S>} />
        </Section>
        <Section>
          <PanelItem label="Kontur" icon={<S w={17} h={13}><path d="M0 1.500h17M0 6.500h17" strokeWidth="1.3" /><path d="M0 11h17" strokeWidth="2.500" /></S>} />
          <PanelItem label="Farbfelder" icon={<div className="w-[16px] h-[12px] grid grid-cols-3 gap-px bg-[#bbb] border border-[#bbb]"><div className="bg-[#333]" /><div className="bg-[#555]" /><div className="bg-[#777]" /><div className="bg-[#888]" /><div className="bg-[#aaa]" /><div className="bg-[#ccc]" /></div>} />
          <PanelItem label="Verlauf" icon={<div className="w-[17px] h-[12px] bg-[linear-gradient(90deg,#333,#ddd)] border border-[#bbb]" />} />
        </Section>
        <Section tight>
          <PanelItem label="Objektformate" icon={<Sty><rect x="4" y="1" width="12" height="12" fill="#777" strokeDasharray="2 1" /></Sty>} />
        </Section>
        <Section tight>
          <PanelItem label="Zeichenformate" icon={<Sty><path d="M8 12 12 1l4 11M9.500 8h5" strokeWidth="1.800" /></Sty>} />
          <PanelItem label="Absatzformate" icon={<Sty><path d="M10 1h6v13M13 1v13" strokeWidth="1.300" /><path d="M7 1h5v6H7z" fill="currentColor" /></Sty>} />
        </Section>
        <Section tight>
          <PanelItem label="Tabellenformate" icon={<Sty><rect x="4.500" y="1.500" width="12" height="11" /><path d="M4.500 5h12M9 8h7M9 10.500h7" /></Sty>} />
          <PanelItem label="Zellenformate" icon={<Sty><rect x="4.500" y="1.500" width="12" height="11" /><rect x="10" y="5" width="6" height="7" fill="currentColor" /></Sty>} />
        </Section>
        <Section tight>
          <PanelItem label="Skripte" icon={<S w={16} h={18}><path d="M13 1C7 1 2 3 3 6s8 2 7 5c-1 2-5 2-8 1 1 3 4 5 7 5 3-1 6-4 5-7-1-3-6-2-6-4 0-1 3-2 5-2z" fill="currentColor" stroke="none" /></S>} />
        </Section>
      </div>
      <div className="h-[4px] shrink-0" />
    </div>
  );
}

function Watermark() {
  return (
    <div className="absolute left-[30px] top-[666px] w-[150px] h-[40px] z-20 pointer-events-none">
      <svg width="60" height="38" className="absolute left-0 top-0" fill="none">
        <path d="M5 6c6-5 11 1 11 10s-2 15-7 15S3 25 5 19c2-3 6-3 9-2" stroke="#9a9a9a" strokeWidth="5" opacity="0.85" />
        <path d="M18 34C20 16 30 3 36 4c4 2-2 15-16 29M24 34C30 26 38 16 36 8" stroke="#e0e0e0" strokeWidth="1.500" opacity="0.55" />
      </svg>
      <span className="absolute left-[34px] top-[26px] text-[11px] font-bold text-white/50 tracking-[0.4px] whitespace-nowrap font-['Open_Sans',sans-serif]">PSD-Tutorials.de</span>
    </div>
  );
}

export default function App() {
  return (
    <div className="relative w-[1280px] h-[720px] overflow-hidden bg-[#3b3b3b] flex flex-col font-['Open_Sans',sans-serif]">
      <TitleBar />
      <MenuBar />
      <ControlBar />
      <div className="flex-1 flex min-h-0">
        <LeftTools />
        <div className="w-[1070px] shrink-0 flex flex-col">
          <Tabs />
          <div className="flex">
            <HRuler />
            <div className="w-[15px] h-[16px] bg-[#3d3d3d] flex items-center justify-center">
              <div className="w-0 h-0 border-x-[4px] border-x-transparent border-b-[5px] border-b-[#8a8a8a]" />
            </div>
          </div>
          <div className="flex">
            <VRuler />
            <Canvas />
            <Scrollbar />
          </div>
          <StatusBar />
        </div>
        <div className="w-[2px] shrink-0 bg-[#2c2c2c]" />
        <RightPanel />
      </div>
      <Watermark />
    </div>
  );
}
